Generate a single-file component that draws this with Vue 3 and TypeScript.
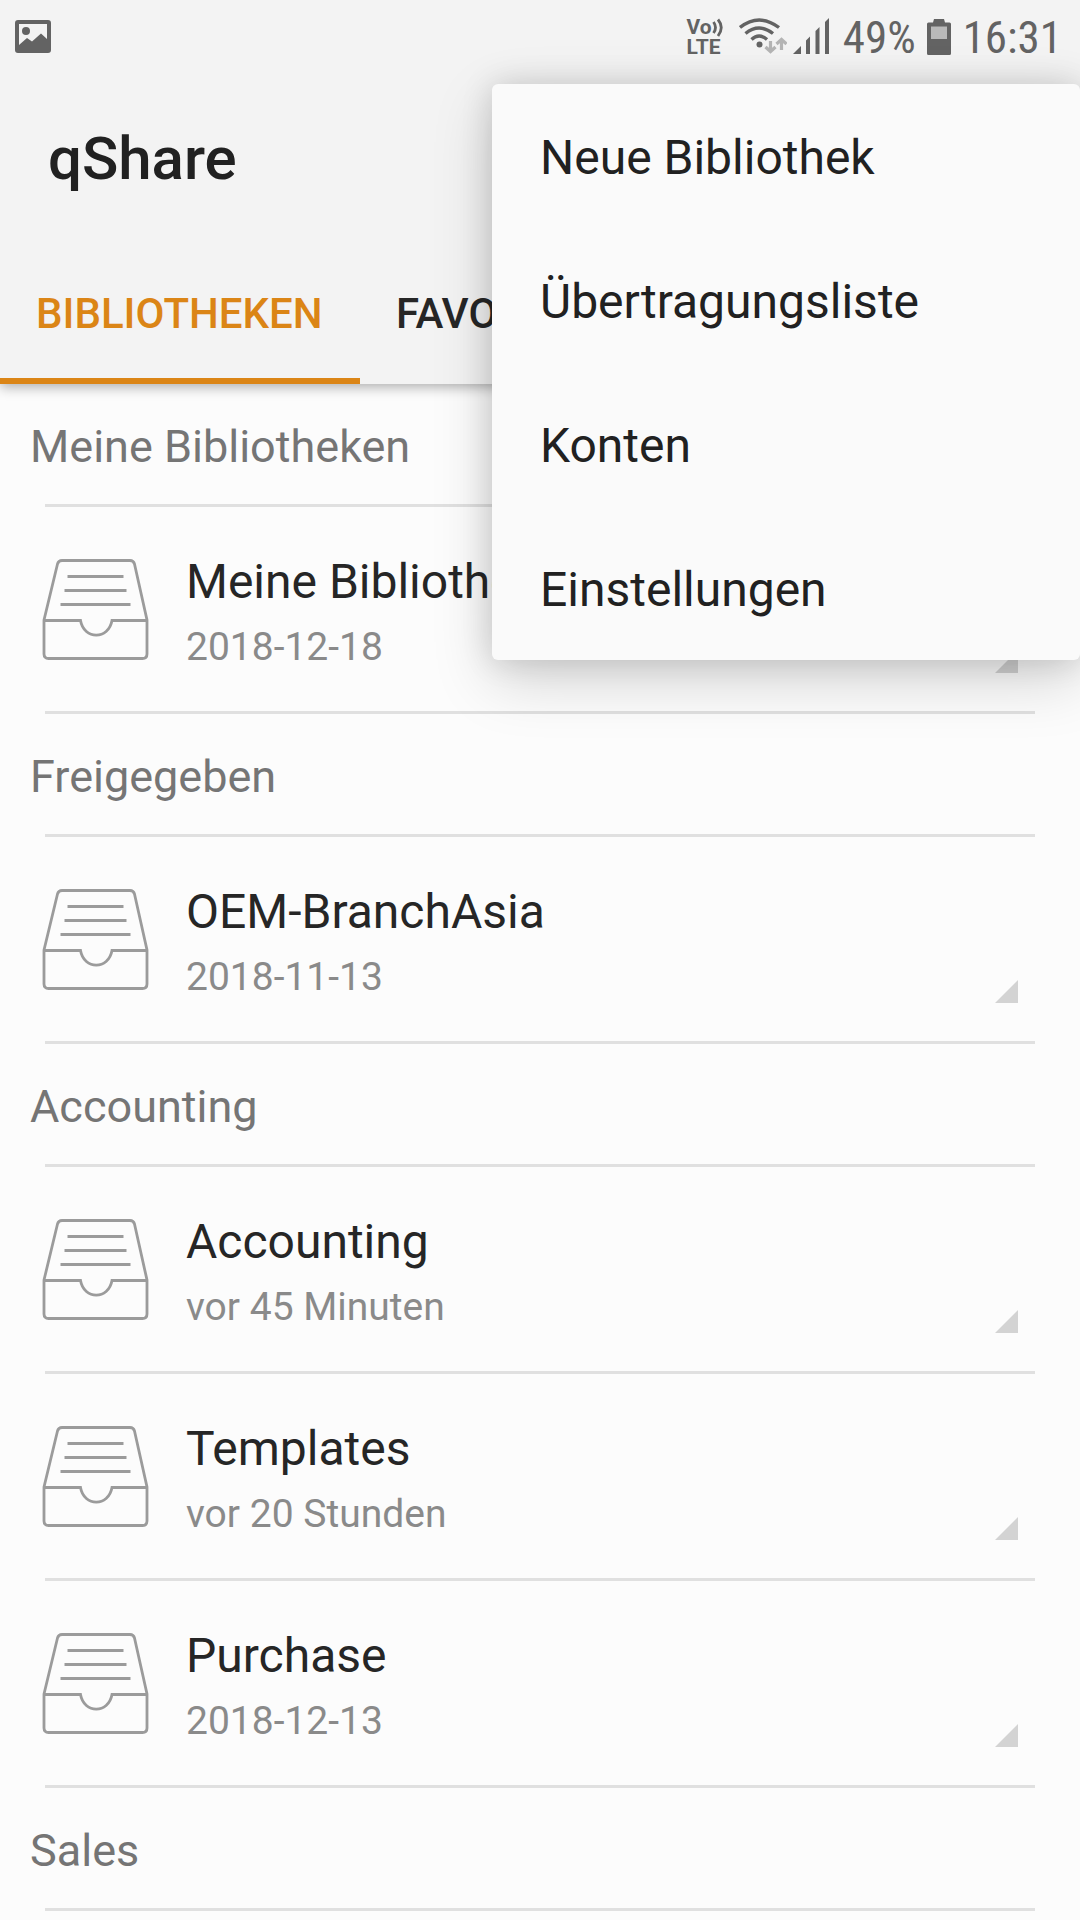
<script setup lang="ts">
import { ref } from 'vue'

interface Library {
  name: string
  detail: string
}

interface Section {
  title: string
  libraries: Library[]
}

const tabs: string[] = ['BIBLIOTHEKEN', 'FAVORITEN']
const activeTab = ref<string>(tabs[0])

const menuItems: string[] = ['Neue Bibliothek', 'Übertragungsliste', 'Konten', 'Einstellungen']

const sections: Section[] = [
  { title: 'Meine Bibliotheken', libraries: [{ name: 'Meine Bibliothek', detail: '2018-12-18' }] },
  { title: 'Freigegeben', libraries: [{ name: 'OEM-BranchAsia', detail: '2018-11-13' }] },
  {
    title: 'Accounting',
    libraries: [
      { name: 'Accounting', detail: 'vor 45 Minuten' },
      { name: 'Templates', detail: 'vor 20 Stunden' },
      { name: 'Purchase', detail: '2018-12-13' },
    ],
  },
  { title: 'Sales', libraries: [] },
]
</script>

<template>
  <div class="screen">
    <header class="top">
      <div class="status">
        <svg class="photo" width="36" height="34" viewBox="0 0 36 34" aria-hidden="true">
          <path
            fill="#636363"
            fill-rule="evenodd"
            d="M3 0H33Q36 0 36 3V30Q36 33 33 33H3Q0 33 0 30V3Q0 0 3 0ZM4 4V25L12 18L17 21.500L26 13.500L32 19V4Z"
          />
          <circle cx="11" cy="11" r="4" fill="#636363" />
        </svg>
        <div class="indicators">
          <div class="volte">
            <span class="volte-row">
              Vo
              <svg width="12" height="20" viewBox="0 0 12 20" aria-hidden="true">
                <path d="M1.500 5Q5.500 10.500 1.500 16M6 2.500Q12.500 10.500 6 19" fill="none" stroke="#636363" stroke-width="2.800" />
              </svg>
            </span>
            <span class="volte-row">LTE</span>
          </div>
          <svg class="wifi" width="48" height="38" viewBox="0 0 48 38" aria-hidden="true">
            <g fill="none" stroke="#636363" stroke-width="3.400">
              <path d="M1 9.500Q20 -5.500 40 9.500" />
              <path d="M6.500 15.500Q20 4.500 34 15.500" />
              <path d="M12.500 21.500Q20 14.500 28 21.500" />
            </g>
            <circle cx="20.500" cy="26.500" r="3" fill="#636363" />
            <g fill="none" stroke="#b4b4b4" stroke-width="3.200">
              <path d="M31.500 23V33.500M26.500 29L31.500 33.500L36.500 29" />
              <path d="M42.500 32V21.500M37.500 26L42.500 21.500L47.500 26" />
            </g>
          </svg>
          <svg class="signal" width="36" height="36" viewBox="0 0 36 36" fill="#636363" aria-hidden="true">
            <path d="M0 36L8 28V36ZM13 22.500L17 18.500V36H13ZM22.500 13L26.500 9V36H22.500ZM32 4L36 0V36H32Z" />
          </svg>
          <span class="percent">49%</span>
          <svg class="battery" width="24" height="36" viewBox="0 0 24 36" aria-hidden="true">
            <path d="M7 0H17L18 3.500H22.500Q24 3.500 24 5V34.500Q24 36 22.500 36H1.500Q0 36 0 34.500V5Q0 3.500 1.500 3.500H6Z" fill="#636363" />
            <path d="M4 7.500H20V20H4Z" fill="#b9b9b9" />
          </svg>
          <span class="clock">16:31</span>
        </div>
      </div>
      <h1 class="title">qShare</h1>
      <nav class="tabs" role="tablist">
        <button
          v-for="tab in tabs"
          :key="tab"
          type="button"
          role="tab"
          class="tab"
          :class="{ active: tab === activeTab }"
          :aria-selected="tab === activeTab"
          @click="activeTab = tab"
        >
          {{ tab }}
        </button>
      </nav>
    </header>

    <main>
      <section v-for="section in sections" :key="section.title">
        <h2 class="section-title">{{ section.title }}</h2>
        <hr class="divider" />
        <ul class="list">
          <li v-for="library in section.libraries" :key="library.name">
            <div class="row">
              <a class="library" href="#">
                <svg class="tray" width="107" height="101" viewBox="0 0 107 101" fill="none" stroke="#9b9b9b" stroke-width="2.800" aria-hidden="true">
                  <path d="M2 61L15.500 5Q16.500 1.500 20 1.500H88Q91.500 1.500 92.500 5L105 61V95Q105 99.500 100.500 99.500H6.500Q2 99.500 2 95Z" />
                  <path d="M2 61.500H38.500C42 81 66.500 81 70 61.500H105" />
                  <path d="M25.500 17.500H81.500M22.500 31.500H84.500M18.500 45.500H88.500" />
                </svg>
                <span class="texts">
                  <span class="name">{{ library.name }}</span>
                  <span class="detail">{{ library.detail }}</span>
                </span>
              </a>
              <button class="more" type="button" :aria-label="'Optionen für ' + library.name">
                <svg width="24" height="24" viewBox="0 0 24 24" aria-hidden="true">
                  <path d="M24 1V24H1Z" fill="#d3d3d3" />
                </svg>
              </button>
            </div>
            <hr class="divider" />
          </li>
        </ul>
      </section>
    </main>

    <div class="menu" role="menu">
      <button v-for="item in menuItems" :key="item" type="button" role="menuitem" class="menu-item">{{ item }}</button>
    </div>
  </div>
</template>

<style>
body {
  margin: 0;
  background: #fcfcfc;
}
</style>

<style scoped>
.screen {
  position: relative;
  min-height: 100vh;
  overflow: hidden;
  background: #fcfcfc;
  color: #262626;
  font-family: Roboto, "Noto Sans", sans-serif;
}

button {
  margin: 0;
  padding: 0;
  border: 0;
  background: none;
  color: inherit;
  font: inherit;
  cursor: pointer;
}

svg {
  display: block;
  flex: none;
}

.top {
  position: relative;
  background: #f3f3f3;
  box-shadow: 0 3px 12px rgba(0, 0, 0, 0.32);
}

.status {
  display: flex;
  justify-content: space-between;
  height: 72px;
  padding: 0 18px 0 15px;
  color: #636363;
}

.photo {
  margin-top: 20px;
}

.indicators {
  display: flex;
  align-items: flex-start;
  padding-top: 17px;
  font-family: "Roboto Condensed", "Liberation Sans Narrow", Roboto, sans-serif;
  font-size: 45px;
  line-height: 42px;
}

.volte {
  display: flex;
  flex-direction: column;
  margin-right: 15px;
  font-family: Roboto, sans-serif;
  font-size: 21px;
  font-weight: 700;
  line-height: 20px;
}

.volte-row {
  display: flex;
}

.wifi {
  margin-top: 1px;
}

.signal {
  margin: 1px 14px 0 6px;
}

.battery {
  margin: 2px 12px 0 11px;
}

.title {
  margin: 0;
  padding: 0 48px;
  color: #212121;
  font-size: 60px;
  font-weight: 500;
  line-height: 174px;
}

.tabs {
  display: flex;
}

.tab {
  height: 138px;
  min-width: 360px;
  padding: 2px 36px 0;
  border-bottom: 6px solid transparent;
  font-size: 42px;
  font-weight: 500;
  text-align: left;
}

.tab.active {
  border-color: #db8516;
  color: #db8516;
}

.section-title {
  margin: 0;
  padding: 6px 30px 0;
  color: #757575;
  font-size: 45px;
  font-weight: 400;
  line-height: 114px;
}

.divider {
  height: 3px;
  margin: 0 45px;
  border: 0;
  background: #e0e0e0;
}

.list {
  margin: 0;
  padding: 0;
  list-style: none;
}

.row {
  display: flex;
  padding-right: 62px;
}

.library {
  display: flex;
  flex: 1;
  gap: 37px;
  padding: 42px 0 32px 42px;
  color: inherit;
  text-decoration: none;
}

.tray {
  margin-top: 10px;
}

.texts {
  display: flex;
  flex-direction: column;
}

.name {
  font-size: 48px;
  line-height: 66px;
}

.detail {
  color: #8a8a8a;
  font-size: 39px;
  line-height: 64px;
}

.more {
  align-self: flex-end;
  margin-bottom: 38px;
}

.menu {
  position: absolute;
  top: 84px;
  right: 0;
  display: flex;
  flex-direction: column;
  width: 588px;
  border-radius: 6px;
  background: #fafafa;
  box-shadow: 0 20px 60px rgba(0, 0, 0, 0.17), 0 0 32px rgba(0, 0, 0, 0.14);
}

.menu-item {
  height: 144px;
  padding: 2px 48px 0;
  color: #212121;
  font-size: 48px;
  text-align: left;
}
</style>
